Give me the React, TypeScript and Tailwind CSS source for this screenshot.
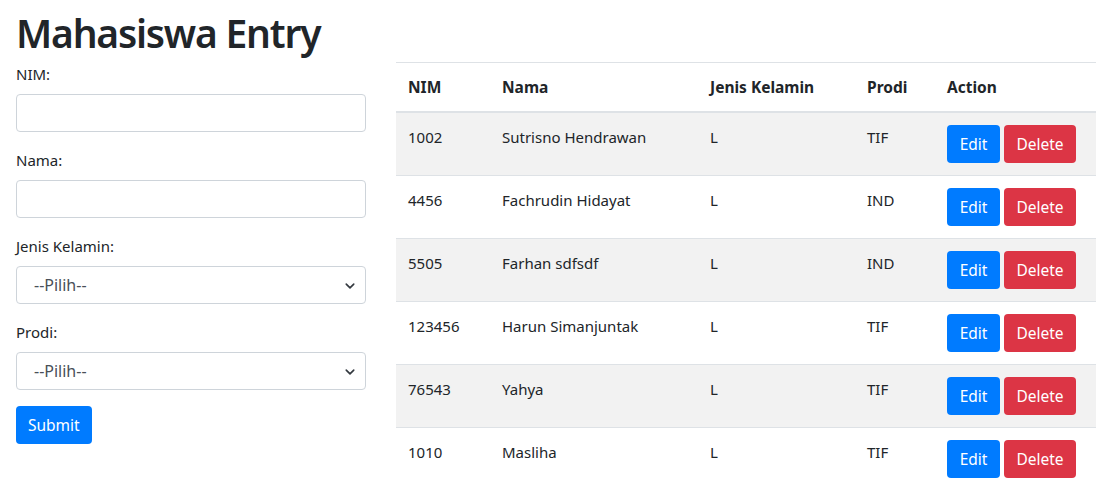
import React from "react";

const rows = [
  { nim: "1002", nama: "Sutrisno Hendrawan", jk: "L", prodi: "TIF" },
  { nim: "4456", nama: "Fachrudin Hidayat", jk: "L", prodi: "IND" },
  { nim: "5505", nama: "Farhan sdfsdf", jk: "L", prodi: "IND" },
  { nim: "123456", nama: "Harun Simanjuntak", jk: "L", prodi: "TIF" },
  { nim: "76543", nama: "Yahya", jk: "L", prodi: "TIF" },
  { nim: "1010", nama: "Masliha", jk: "L", prodi: "TIF" },
];

function Chevron() {
  return (
    <svg width="10" height="10" viewBox="0 0 16 16" className="absolute right-[10px] top-[14px] pointer-events-none">
      <path d="M2 5l6 6 6-6" fill="none" stroke="#343a40" strokeWidth="2.6" strokeLinecap="round" strokeLinejoin="round" />
    </svg>
  );
}

function Select() {
  return (
    <div className="relative w-full h-[38px] border border-[#ced4da] rounded-[4px] bg-white">
      <span className="absolute left-[17px] top-[6px] text-[16px] leading-[24px] text-[#495057]">--Pilih--</span>
      <Chevron />
    </div>
  );
}

export default function App() {
  return (
    <div className="w-[1096px] h-[485px] overflow-hidden bg-white text-[#212529]" style={{ fontFamily: '"Noto Sans", "Open Sans", sans-serif' }}>
      <h1 className="pl-[16px] pt-[9px] h-[62px] text-[39px] leading-[48px] font-semibold tracking-[-1.2px]">Mahasiswa Entry</h1>
      <div className="flex">
        <div className="ml-[16px] w-[350px] flex flex-col text-[15px]">
          <label className="leading-[24px] mb-[8px]">NIM:</label>
          <div className="h-[38px] border border-[#ced4da] rounded-[4px] mb-[16px]" />
          <label className="leading-[24px] mb-[8px]">Nama:</label>
          <div className="h-[38px] border border-[#ced4da] rounded-[4px] mb-[16px]" />
          <label className="leading-[24px] mb-[8px]">Jenis Kelamin:</label>
          <div className="mb-[16px]"><Select /></div>
          <label className="leading-[24px] mb-[8px]">Prodi:</label>
          <div className="mb-[16px]"><Select /></div>
          <div>
            <button className="h-[38px] px-[12px] bg-[#007bff] text-white rounded-[4px] text-[15.5px] leading-[24px]">Submit</button>
          </div>
        </div>
        <div className="ml-[30px] w-[700px]">
          <table className="w-full border-collapse text-[15px] leading-[24px]">
            <thead>
              <tr className="border-t border-[#dee2e6] border-b-2">
                <th className="text-left font-bold p-[12px] w-[94px] text-[15.5px]">NIM</th>
                <th className="text-left font-bold p-[12px] w-[208px] text-[15.5px]">Nama</th>
                <th className="text-left font-bold p-[12px] w-[157px] text-[15.5px]">Jenis Kelamin</th>
                <th className="text-left font-bold p-[12px] w-[80px] text-[15.5px]">Prodi</th>
                <th className="text-left font-bold p-[12px] text-[15.5px]">Action</th>
              </tr>
            </thead>
            <tbody>
              {rows.map((r, i) => (
                <tr key={i} className={`border-t border-[#dee2e6] ${i % 2 === 0 ? "bg-[#f2f2f2]" : "bg-white"}`}>
                  <td className="p-[12px] align-top">{r.nim}</td>
                  <td className="p-[12px] align-top">{r.nama}</td>
                  <td className="p-[12px] align-top">{r.jk}</td>
                  <td className="p-[12px] align-top">{r.prodi}</td>
                  <td className="p-[12px] align-top">
                    <div className="flex gap-[4px]">
                      <button className="h-[38px] w-[53px] bg-[#007bff] text-white rounded-[4px] text-[15.5px]">Edit</button>
                      <button className="h-[38px] w-[72px] bg-[#dc3545] text-white rounded-[4px] text-[15.5px]">Delete</button>
                    </div>
                  </td>
                </tr>
              ))}
            </tbody>
          </table>
        </div>
      </div>
    </div>
  );
}
